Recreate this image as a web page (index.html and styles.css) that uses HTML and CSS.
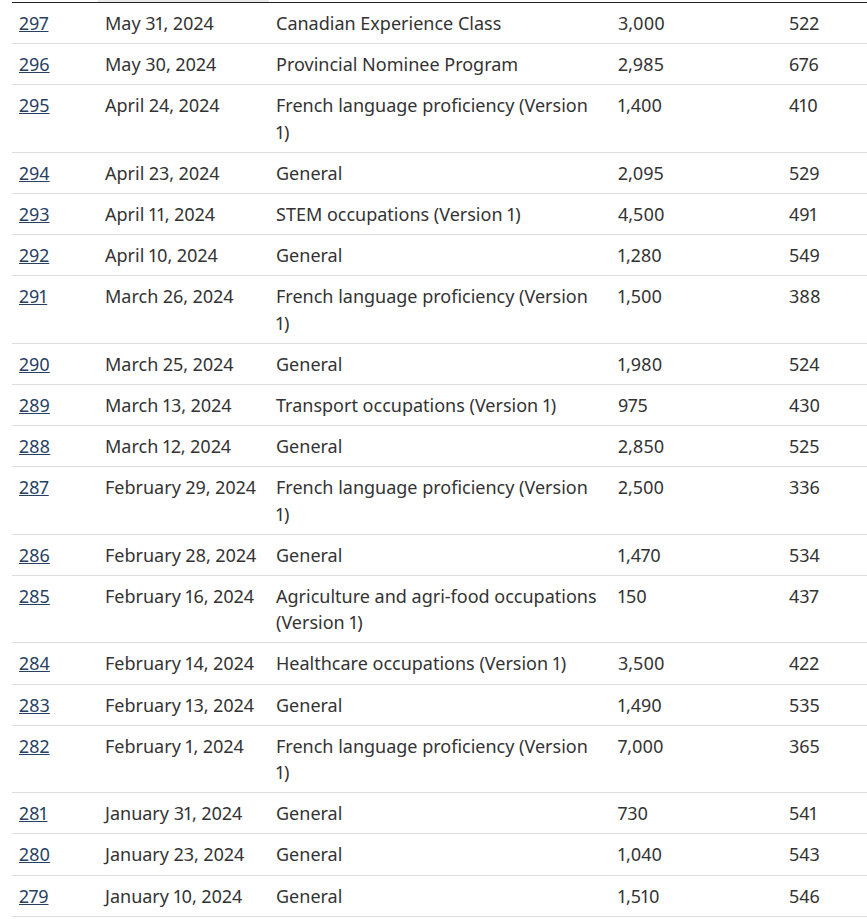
FILE: index.html
```html
<!DOCTYPE html>
<html lang="en">
<head>
<meta charset="utf-8">
<title>Rounds</title>
<link rel="stylesheet" href="styles.css">
</head>
<body>
<div class="wrap">
<table class="rounds">
<colgroup><col class="c1"><col class="c2"><col class="c3"><col class="c4"><col class="c5"></colgroup>
<thead><tr><th></th><th class="sorted"></th><th></th><th></th><th></th></tr></thead>
<tbody>
<tr><td><a href="#">297</a></td><td>May 31, 2024</td><td>Canadian Experience Class</td><td>3,000</td><td>522</td></tr>
<tr><td><a href="#">296</a></td><td>May 30, 2024</td><td>Provincial Nominee Program</td><td>2,985</td><td>676</td></tr>
<tr><td><a href="#">295</a></td><td>April 24, 2024</td><td>French language proficiency (Version 1)</td><td>1,400</td><td>410</td></tr>
<tr><td><a href="#">294</a></td><td>April 23, 2024</td><td>General</td><td>2,095</td><td>529</td></tr>
<tr><td><a href="#">293</a></td><td>April 11, 2024</td><td>STEM occupations (Version 1)</td><td>4,500</td><td>491</td></tr>
<tr><td><a href="#">292</a></td><td>April 10, 2024</td><td>General</td><td>1,280</td><td>549</td></tr>
<tr><td><a href="#">291</a></td><td>March 26, 2024</td><td>French language proficiency (Version 1)</td><td>1,500</td><td>388</td></tr>
<tr><td><a href="#">290</a></td><td>March 25, 2024</td><td>General</td><td>1,980</td><td>524</td></tr>
<tr><td><a href="#">289</a></td><td>March 13, 2024</td><td>Transport occupations (Version 1)</td><td>975</td><td>430</td></tr>
<tr><td><a href="#">288</a></td><td>March 12, 2024</td><td>General</td><td>2,850</td><td>525</td></tr>
<tr><td><a href="#">287</a></td><td>February 29, 2024</td><td>French language proficiency (Version 1)</td><td>2,500</td><td>336</td></tr>
<tr><td><a href="#">286</a></td><td>February 28, 2024</td><td>General</td><td>1,470</td><td>534</td></tr>
<tr><td><a href="#">285</a></td><td>February 16, 2024</td><td>Agriculture and agri-food occupations (Version 1)</td><td>150</td><td>437</td></tr>
<tr><td><a href="#">284</a></td><td>February 14, 2024</td><td>Healthcare occupations (Version 1)</td><td>3,500</td><td>422</td></tr>
<tr><td><a href="#">283</a></td><td>February 13, 2024</td><td>General</td><td>1,490</td><td>535</td></tr>
<tr><td><a href="#">282</a></td><td>February 1, 2024</td><td>French language proficiency (Version 1)</td><td>7,000</td><td>365</td></tr>
<tr><td><a href="#">281</a></td><td>January 31, 2024</td><td>General</td><td>730</td><td>541</td></tr>
<tr><td><a href="#">280</a></td><td>January 23, 2024</td><td>General</td><td>1,040</td><td>543</td></tr>
<tr><td><a href="#">279</a></td><td>January 10, 2024</td><td>General</td><td>1,510</td><td>546</td></tr>
</tbody>
</table>
</div>
</body>
</html>
```
FILE: styles.css
```css
html, body {
  margin: 0;
  padding: 0;
  background: #fff;
}
body {
  font-family: "Noto Sans", "Open Sans", sans-serif;
  font-size: 18px;
  color: #333;
  font-variant-numeric: proportional-nums;
}
.wrap {
  width: 867px;
  overflow: hidden;
  padding-left: 12px;
  box-sizing: border-box;
}
.rounds {
  border-collapse: collapse;
  table-layout: fixed;
  width: 941px;
}
.c1 { width: 86px; }
.c2 { width: 171px; }
.c3 { width: 342px; }
.c4 { width: 171px; }
.c5 { width: 171px; }
.rounds thead th {
  height: 2px;
  padding: 0;
  border-bottom: 1px solid #222;
}
.rounds thead th.sorted {
  background: #eaeaea;
}
.rounds td {
  padding: 7px 7px;
  line-height: 26.2px;
  vertical-align: top;
  border-bottom: 1px solid #ddd;
  text-align: left;
}
.rounds a {
  color: #284162;
  text-decoration: underline;
}
```
